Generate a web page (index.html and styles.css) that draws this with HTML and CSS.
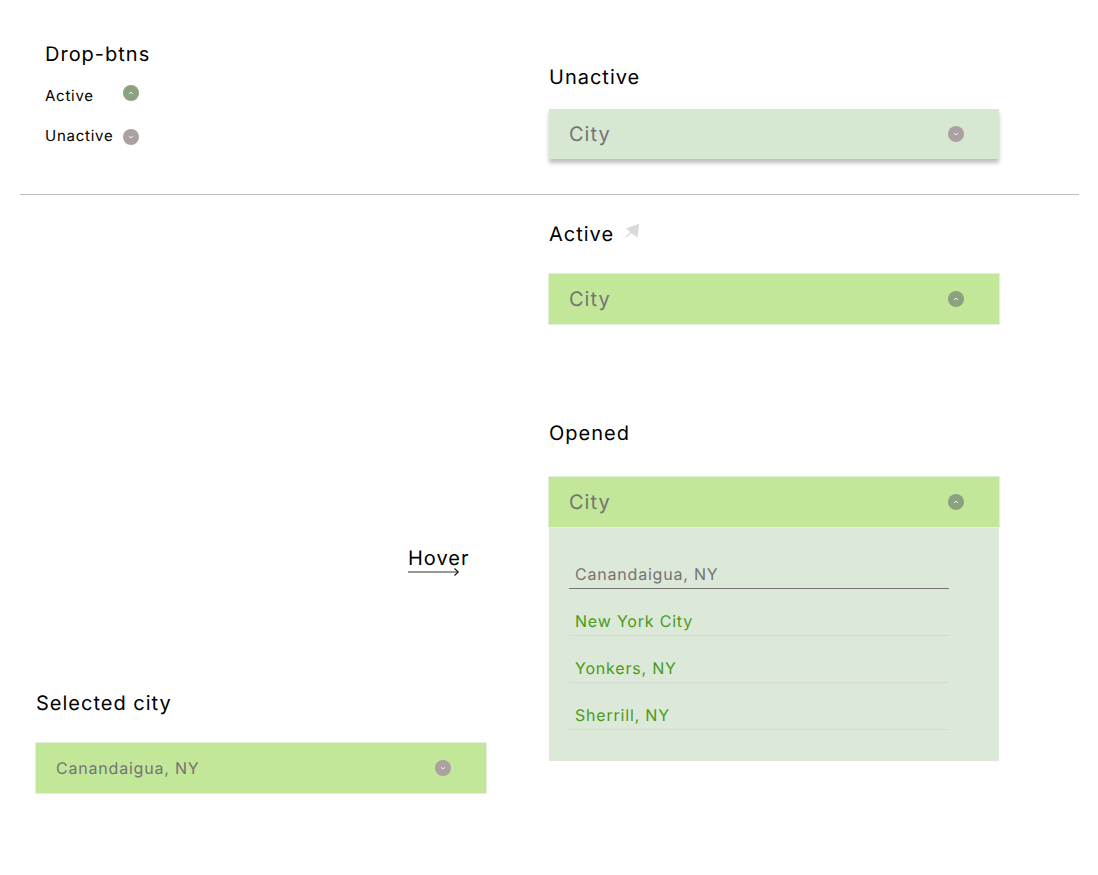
FILE: index.html
```html
<!DOCTYPE html>
<html lang="en">
<head>
<meta charset="utf-8">
<title>City dropdown</title>
<link rel="stylesheet" href="styles.css">
</head>
<body>
<svg class="defs" width="0" height="0" aria-hidden="true">
  <symbol id="up" viewBox="0 0 16 16"><circle cx="8" cy="8" r="8"/><path d="M5.9 8.9 8 7.2 10.1 8.9"/></symbol>
  <symbol id="down" viewBox="0 0 16 16"><circle cx="8" cy="8" r="8"/><path d="M5.9 7.2 8 8.9 10.1 7.2"/></symbol>
</svg>
<header class="top">
  <section class="buttons">
    <h2 class="title">Drop-btns</h2>
    <div class="state"><span class="state-name">Active</span><svg class="icon icon-up"><use href="#up"/></svg></div>
    <div class="state state-second"><span class="state-name">Unactive</span><svg class="icon icon-down"><use href="#down"/></svg></div>
  </section>
  <section class="unactive">
    <h2 class="title">Unactive</h2>
    <div class="field field-idle"><span>City</span><svg class="icon icon-down"><use href="#down"/></svg></div>
  </section>
</header>
<main class="board">
  <div class="left">
    <div class="hover">
      <h2 class="title">Hover</h2>
      <svg class="arrow" width="52" height="10" viewBox="0 0 52 10"><path class="shaft" d="M0 5h50"/><path class="head" d="M46.5 1.5 50.3 5 46.5 8.5"/></svg>
    </div>
    <section class="selected">
      <h2 class="title">Selected city</h2>
      <div class="field field-active field-small"><span>Canandaigua, NY</span><svg class="icon icon-down"><use href="#down"/></svg></div>
    </section>
  </div>
  <div class="right">
    <section class="active">
      <h2 class="title">Active <svg class="cursor" width="15" height="16" viewBox="0 0 15 16"><path d="M14.2 .8 1 5.3 5.2 9 .7 13.8l.8.8L6.3 10 12.5 14.4z"/></svg></h2>
      <div class="field field-active"><span>City</span><svg class="icon icon-up"><use href="#up"/></svg></div>
    </section>
    <section class="opened">
      <h2 class="title">Opened</h2>
      <div class="field field-active"><span>City</span><svg class="icon icon-up"><use href="#up"/></svg></div>
      <ul class="menu">
        <li class="option option-current">Canandaigua, NY</li>
        <li class="option">New York City</li>
        <li class="option">Yonkers, NY</li>
        <li class="option">Sherrill, NY</li>
      </ul>
    </section>
  </div>
</main>
</body>
</html>
```
FILE: styles.css
```css
* { box-sizing: border-box; }
body {
  margin: 0;
  width: 1098px;
  height: 875px;
  overflow: hidden;
  background: #fff;
  color: #000;
  font: 370 20px/24px Inter, sans-serif;
  letter-spacing: 1px;
  text-rendering: geometricPrecision;
}
.defs { display: block; }
.title { margin: 0; font-size: 20px; font-weight: inherit; line-height: 24px; }
.top {
  display: grid;
  grid-template-columns: 529px 450px;
  width: 1059px;
  height: 195px;
  margin-left: 20px;
  border-bottom: 1px solid #bfbfbf;
}
.buttons { padding: 42px 0 0 25px; }
.state { display: flex; height: 18px; margin-top: 21px; font-size: 15px; line-height: 18px; letter-spacing: .75px; }
.state-second { margin-top: 22px; }
.state-name { width: 78px; }
.state .icon { margin-top: -2px; }
.state-second .icon { margin-top: 2px; }
.icon { display: block; flex: none; width: 16px; height: 16px; }
.icon-up { fill: #8ba17f; }
.icon-down { fill: #ada0a0; }
symbol circle { stroke: none; }
symbol path { fill: none; stroke: #fff; stroke-width: .85; }
.unactive { padding-top: 65px; }
.field {
  display: flex;
  align-items: center;
  justify-content: space-between;
  width: 450px;
  height: 50px;
  padding: 0 35px 0 20px;
  color: #747474;
}
.field-idle { margin-top: 20px; background: #d6e8d2; box-shadow: 0 4px 4px rgba(0, 0, 0, .25); }
.field-active { background: #c2e798; box-shadow: 0 0 0 1px #e2efde; }
.field-small { font-size: 16px; letter-spacing: .8px; }
.board { display: grid; grid-template-columns: 549px 450px; }
.hover { width: 70px; margin: 351px 0 0 408px; }
.arrow { display: block; margin-top: -3px; fill: none; }
.shaft { stroke: #777; stroke-width: 1.6; }
.head { stroke: #111; stroke-width: 1.1; }
.selected { margin: 114px 0 0 36px; }
.selected .field { margin-top: 28px; }
.active { padding-top: 27px; }
.active .title { display: flex; gap: 11px; }
.cursor { margin-top: 1px; fill: #d9d9d9; }
.active .field { margin-top: 28px; }
.opened { margin-top: 97px; }
.opened .field { position: relative; margin-top: 32px; }
.menu {
  height: 234px;
  margin: 0;
  padding: 15px 50px 0 20px;
  background: #dce8d8;
  list-style: none;
}
.option {
  height: 47px;
  padding: 22px 6px 0;
  border-bottom: 1px solid #d6d9d6;
  color: #489b1b;
  font-size: 16px;
  line-height: 20px;
  letter-spacing: .8px;
}
.option-current { border-color: #747474; color: #747474; }
```
